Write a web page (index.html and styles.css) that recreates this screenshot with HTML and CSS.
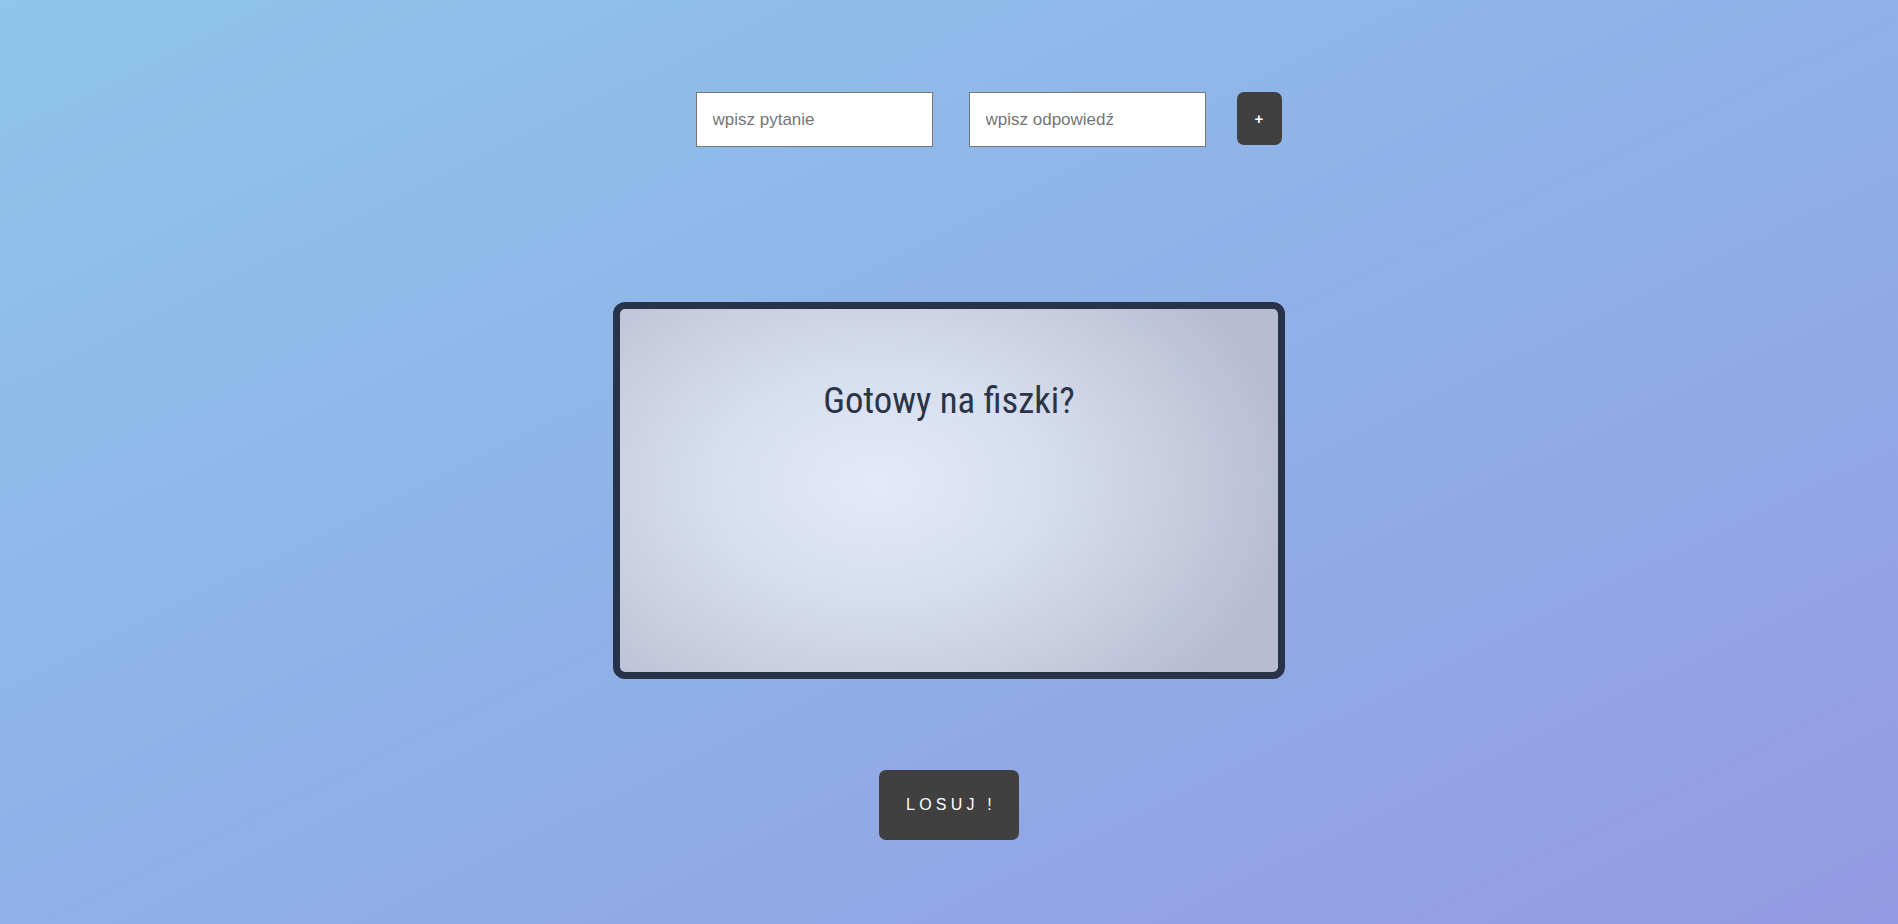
FILE: index.html
```html
<!DOCTYPE html>
<html lang="pl">
<head>
<meta charset="utf-8">
<title>Fiszki</title>
<link rel="stylesheet" href="styles.css">
</head>
<body>
  <div class="form-row">
    <input class="field" type="text" placeholder="wpisz pytanie">
    <input class="field field-answer" type="text" placeholder="wpisz odpowiedź">
    <button class="add-btn">+</button>
  </div>
  <div class="card">
    <h1 class="card-text">Gotowy na fiszki?</h1>
  </div>
  <div class="actions">
    <button class="draw-btn">LOSUJ !</button>
  </div>
</body>
</html>
```
FILE: styles.css
```css
html, body {
  margin: 0;
  padding: 0;
  height: 100%;
}
body {
  background: linear-gradient(to bottom right, #8ec5eb 0%, #8fb3e8 45%, #949be2 100%);
  font-family: "Liberation Sans", Arial, sans-serif;
  overflow: hidden;
}
.form-row {
  display: flex;
  justify-content: center;
  align-items: flex-start;
  padding-top: 92px;
  padding-left: 79px;
}
.field {
  box-sizing: border-box;
  width: 237px;
  height: 55px;
  border: 1px solid #767676;
  padding: 0 16px;
  font-family: "Liberation Sans", Arial, sans-serif;
  font-size: 17px;
  color: #333;
  background: #fff;
  outline: none;
}
.field::placeholder {
  color: #757575;
}
.field-answer {
  margin-left: 36px;
}
.add-btn {
  box-sizing: border-box;
  margin-left: 31px;
  width: 45px;
  height: 53px;
  border: none;
  border-radius: 7px;
  background: #404040;
  color: #fff;
  font-family: "Liberation Sans", Arial, sans-serif;
  font-weight: bold;
  font-size: 15px;
  padding: 0;
  cursor: pointer;
}
.card {
  box-sizing: border-box;
  width: 672px;
  height: 377px;
  margin: 155px auto 0;
  border: 7px solid #28334a;
  border-radius: 12px;
  background: radial-gradient(ellipse 62% 78% at 39% 48%, #e3e9f8 0%, #d7deef 40%, #c5cbdd 78%, #b8bdd2 100%);
  text-align: center;
}
.card-text {
  margin: 0;
  padding-top: 70px;
  font-family: "Roboto Condensed", Roboto, sans-serif;
  font-stretch: condensed;
  font-weight: 400;
  font-size: 36.7px;
  line-height: normal;
  color: #2b3446;
}
.actions {
  display: flex;
  justify-content: center;
  margin-top: 91px;
}
.draw-btn {
  box-sizing: border-box;
  height: 70px;
  padding: 0 23px 0 27px;
  border: none;
  border-radius: 7px;
  background: #404040;
  color: #fff;
  font-family: "Liberation Sans", Arial, sans-serif;
  font-size: 16px;
  letter-spacing: 4.2px;
  cursor: pointer;
}
```
